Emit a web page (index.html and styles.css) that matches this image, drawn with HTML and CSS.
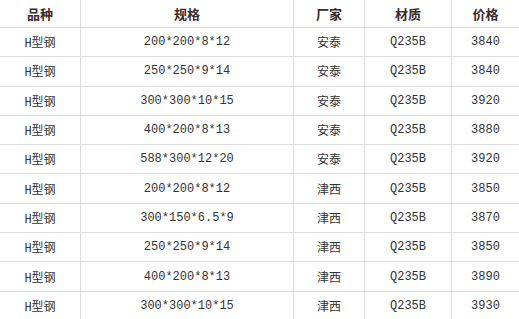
FILE: index.html
```html
<!DOCTYPE html>
<html lang="zh-CN">
<head>
    <meta charset="UTF-8">
    <title>H型钢价格</title>
    <link rel="stylesheet" href="styles.css">
</head>
<body>
    <table class="price-table">
        <thead>
            <tr>
                <th class="col-name">品种</th>
                <th class="col-spec">规格</th>
                <th class="col-maker">厂家</th>
                <th class="col-grade">材质</th>
                <th class="col-price">价格</th>
            </tr>
        </thead>
        <tbody>
            <tr><td>H型钢</td><td>200*200*8*12</td><td>安泰</td><td>Q235B</td><td>3840</td></tr>
            <tr><td>H型钢</td><td>250*250*9*14</td><td>安泰</td><td>Q235B</td><td>3840</td></tr>
            <tr><td>H型钢</td><td>300*300*10*15</td><td>安泰</td><td>Q235B</td><td>3920</td></tr>
            <tr><td>H型钢</td><td>400*200*8*13</td><td>安泰</td><td>Q235B</td><td>3880</td></tr>
            <tr><td>H型钢</td><td>588*300*12*20</td><td>安泰</td><td>Q235B</td><td>3920</td></tr>
            <tr><td>H型钢</td><td>200*200*8*12</td><td>津西</td><td>Q235B</td><td>3850</td></tr>
            <tr><td>H型钢</td><td>300*150*6.5*9</td><td>津西</td><td>Q235B</td><td>3870</td></tr>
            <tr><td>H型钢</td><td>250*250*9*14</td><td>津西</td><td>Q235B</td><td>3850</td></tr>
            <tr><td>H型钢</td><td>400*200*8*13</td><td>津西</td><td>Q235B</td><td>3890</td></tr>
            <tr><td>H型钢</td><td>300*300*10*15</td><td>津西</td><td>Q235B</td><td>3930</td></tr>
        </tbody>
    </table>
</body>
</html>
```

FILE: styles.css
```css
body {
    margin: 0;
    font-family: "Liberation Mono", "Noto Sans CJK SC", monospace;
    font-size: 12px;
    color: #333;
    background: #fff;
}
.price-table {
    width: 519px;
    border-collapse: collapse;
    table-layout: fixed;
}
.price-table th,
.price-table td {
    text-align: center;
    border-left: 1px solid #ddd;
    border-bottom: 1px solid #ddd;
    padding: 0;
    white-space: nowrap;
}
.price-table th:first-child,
.price-table td:first-child {
    border-left: none;
}
.price-table th {
    height: 27px;
    font-family: "Noto Sans CJK SC", sans-serif;
    font-weight: bold;
    font-size: 13px;
    color: #3a2a2a;
}
.price-table td {
    height: 28.3px;
}
.col-name { width: 80px; }
.col-spec { width: 212px; }
.col-maker { width: 70px; }
.col-grade { width: 86px; }
.col-price { width: auto; }
```
